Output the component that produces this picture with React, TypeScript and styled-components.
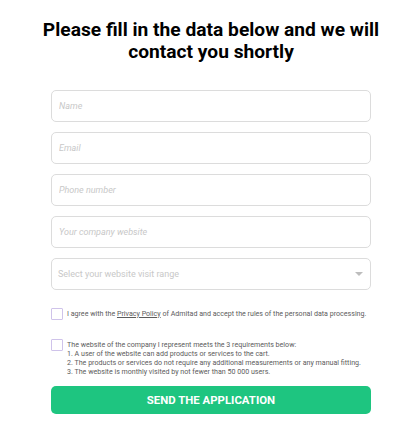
import styled, { createGlobalStyle } from 'styled-components'

const GlobalStyle = createGlobalStyle`
  body {
    margin: 0;
    background: #fff;
    font-family: Roboto, 'Liberation Sans', sans-serif;
  }
`

const App = () => {
  return (
    <>
      <GlobalStyle />
      <Wrapper>
        <Title>Please fill in the data below and we will contact you shortly</Title>
        <Form>
          <Fields>
            <Input placeholder="Name" />
            <Input placeholder="Email" />
            <Input placeholder="Phone number" />
            <Input placeholder="Your company website" />
            <SelectBox>
              <SelectText>Select your website visit range</SelectText>
              <Caret />
            </SelectBox>
          </Fields>
          <Check $top={18}>
            <Box />
            <CheckText>
              I agree with the <PolicyLink>Privacy Policy</PolicyLink> of Admitad and accept the rules of the personal data processing.
            </CheckText>
          </Check>
          <Check $top={19}>
            <Box />
            <CheckText>
              The website of the company I represent meets the 3 requirements below:
              <br />1. A user of the website can add products or services to the cart.
              <br />2. The products or services do not require any additional measurements or any manual fitting.
              <br />3. The website is monthly visited by not fewer than 50 000 users.
            </CheckText>
          </Check>
          <Button>SEND THE APPLICATION</Button>
        </Form>
      </Wrapper>
    </>
  )
}

const Wrapper = styled.div`
  box-sizing: border-box;
  width: 418px;
  padding: 19px 0 0 4px;
  display: flex;
  flex-direction: column;
  align-items: center;
`

const Title = styled.h1`
  margin: 0;
  width: 350px;
  font-family: Roboto, sans-serif;
  font-weight: 700;
  font-size: 19.2px;
  line-height: 22px;
  text-align: center;
  color: #000;
`

const Form = styled.div`
  width: 320px;
  margin-top: 27px;
  display: flex;
  flex-direction: column;
`

const Fields = styled.div`
  display: flex;
  flex-direction: column;
  gap: 10px;
`

const Input = styled.input`
  box-sizing: border-box;
  height: 32px;
  width: 100%;
  border: 1px solid #dcdcdc;
  border-radius: 5px;
  padding: 0 7px;
  font-family: Roboto, sans-serif;
  font-size: 9px;
  font-style: italic;
  outline: none;
  &::placeholder {
    color: #c8c8c8;
  }
`

const SelectBox = styled.div`
  box-sizing: border-box;
  height: 32px;
  border: 1px solid #dcdcdc;
  border-radius: 5px;
  padding: 0 7px 0 6px;
  display: flex;
  align-items: center;
  justify-content: space-between;
`

const SelectText = styled.span`
  font-size: 9px;
  color: #c8c8c8;
`

const Caret = styled.span`
  width: 0;
  height: 0;
  border-left: 4px solid transparent;
  border-right: 4px solid transparent;
  border-top: 4px solid #bdbdbd;
`

const Check = styled.div<{ $top: number }>`
  display: flex;
  align-items: flex-start;
  gap: 4px;
  margin-top: ${p => p.$top}px;
`

const Box = styled.span`
  box-sizing: border-box;
  flex: 0 0 12px;
  height: 12px;
  border: 1px solid #cfc3ea;
  border-radius: 1px;
`

const CheckText = styled.p`
  margin: 0;
  font-size: 7.1px;
  line-height: 9px;
  color: #5c5c5c;
  padding-top: 0.5px;
`

const PolicyLink = styled.span`
  text-decoration: underline;
`

const Button = styled.button`
  margin-top: 10px;
  height: 28px;
  border: none;
  border-radius: 5px;
  background: #1ec580;
  color: #fff;
  font-family: Roboto, sans-serif;
  font-weight: 700;
  font-size: 11.4px;
`

export default App
